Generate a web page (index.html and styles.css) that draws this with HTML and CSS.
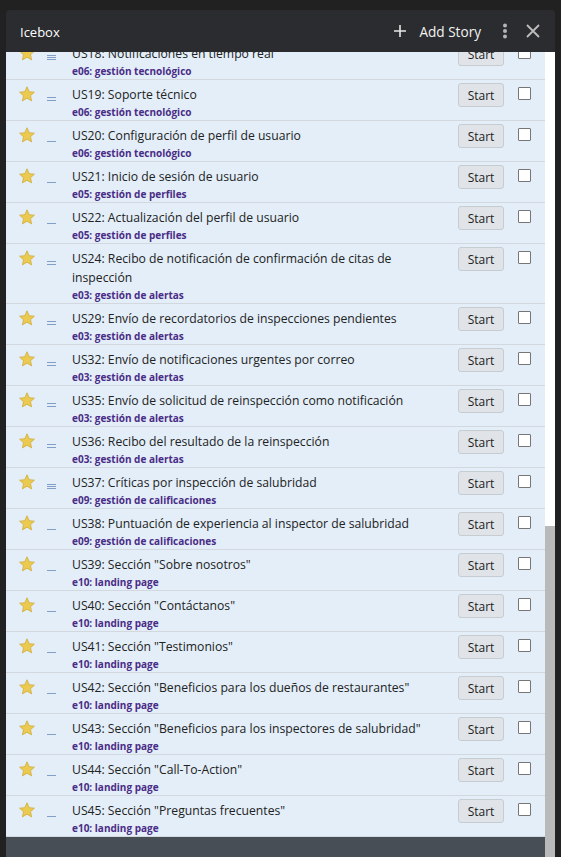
FILE: index.html
```html
<!DOCTYPE html>
<html lang="es">
<head>
<meta charset="utf-8">
<title>Icebox</title>
<link rel="stylesheet" href="styles.css">
</head>
<body>
<div class="panel">
  <header class="panel-head">
    <span class="panel-title">Icebox</span>
    <div class="actions">
      <button class="add-story">
        <svg class="plus" width="12" height="12" viewBox="0 0 12 12"><path d="M6 0v12M0 6h12" stroke="currentColor" stroke-width="1.6"/></svg>
        Add Story
      </button>
      <button class="icon-btn kebab" aria-label="More">
        <svg width="6" height="16" viewBox="0 0 6 16"><circle cx="3" cy="2.5" r="2"/><circle cx="3" cy="8" r="2"/><circle cx="3" cy="13.5" r="2"/></svg>
      </button>
      <button class="icon-btn close" aria-label="Close">
        <svg width="14" height="14" viewBox="0 0 14 14"><path d="M1 1l12 12M13 1L1 13" stroke="currentColor" stroke-width="1.8"/></svg>
      </button>
    </div>
  </header>
  <div class="panel-body">
    <div class="scroller" id="scroller">
      <ul class="stories" id="stories"></ul>
    </div>
    <div class="scrollbar"><div class="thumb" style="margin-top:474px"></div></div>
  </div>
</div>
<script src="script.js"></script>
</body>
</html>
```

FILE: script.js
```js
const stories = [
  ["US18: Notificaciones en tiempo real", "e06: gestión tecnológico", 3],
  ["US19: Soporte técnico", "e06: gestión tecnológico", 2],
  ["US20: Configuración de perfil de usuario", "e06: gestión tecnológico", 1],
  ["US21: Inicio de sesión de usuario", "e05: gestión de perfiles", 1],
  ["US22: Actualización del perfil de usuario", "e05: gestión de perfiles", 1],
  ["US24: Recibo de notificación de confirmación de citas de inspección", "e03: gestión de alertas", 2],
  ["US29: Envío de recordatorios de inspecciones pendientes", "e03: gestión de alertas", 2],
  ["US32: Envío de notificaciones urgentes por correo", "e03: gestión de alertas", 2],
  ["US35: Envío de solicitud de reinspección como notificación", "e03: gestión de alertas", 2],
  ["US36: Recibo del resultado de la reinspección", "e03: gestión de alertas", 2],
  ["US37: Críticas por inspección de salubridad", "e09: gestión de calificaciones", 3],
  ["US38: Puntuación de experiencia al inspector de salubridad", "e09: gestión de calificaciones", 1],
  ["US39: Sección \"Sobre nosotros\"", "e10: landing page", 1],
  ["US40: Sección \"Contáctanos\"", "e10: landing page", 1],
  ["US41: Sección \"Testimonios\"", "e10: landing page", 1],
  ["US42: Sección \"Beneficios para los dueños de restaurantes\"", "e10: landing page", 1],
  ["US43: Sección \"Beneficios para los inspectores de salubridad\"", "e10: landing page", 1],
  ["US44: Sección \"Call-To-Action\"", "e10: landing page", 1],
  ["US45: Sección \"Preguntas frecuentes\"", "e10: landing page", 1]
];

const star = '<svg width="16" height="16" viewBox="0 0 16 16"><path d="M8 0.8l2.2 4.9 5.2 0.5-3.9 3.5 1.1 5.2L8 12.2l-4.6 2.7 1.1-5.2L0.6 6.2l5.2-0.5z" fill="#ecca4f" stroke="#cfac3a" stroke-width="0.8" stroke-linejoin="round"/></svg>';

const list = document.getElementById("stories");
list.innerHTML = stories.map(([name, epic, pts]) => {
  const lines = '<i></i>'.repeat(pts);
  return '<li class="story">' +
    '<span class="star">' + star + '</span>' +
    '<span class="pts pts-' + pts + '">' + lines + '</span>' +
    '<div class="info"><div class="name"></div><div class="epic"></div></div>' +
    '<button class="start">Start</button>' +
    '<span class="check"></span>' +
    '</li>';
}).join("");

list.querySelectorAll(".story").forEach((li, i) => {
  li.querySelector(".name").textContent = stories[i][0];
  li.querySelector(".epic").textContent = stories[i][1];
});

document.getElementById("scroller").scrollTop = 13;
```

FILE: styles.css
```css
* { box-sizing: border-box; }

html, body {
  margin: 0;
  height: 100%;
  overflow: hidden;
}

body {
  background: #212121;
  font-family: "Open Sans", "Noto Sans", sans-serif;
  padding: 10px 6px 0;
}

.panel {
  background: #2b2c2f;
  border-radius: 4px 4px 0 0;
  height: calc(100vh - 10px);
  display: flex;
  flex-direction: column;
}

.panel-head {
  height: 42px;
  flex: none;
  display: flex;
  align-items: center;
  justify-content: space-between;
  padding: 0 15px 0 14px;
  color: #fff;
}

.panel-title {
  font-size: 13px;
  color: #fff;
  padding-top: 1px;
}

.actions {
  display: flex;
  align-items: center;
}

.add-story {
  background: none;
  border: 0;
  color: #f2f2f2;
  font: 13.6px "Open Sans", sans-serif;
  display: flex;
  align-items: center;
  gap: 13px;
  padding: 0;
}

.plus { color: #e6e6e6; }

.icon-btn {
  background: none;
  border: 0;
  padding: 0;
  display: flex;
  align-items: center;
  justify-content: center;
}

.kebab {
  margin-left: 21px;
  fill: #b5b5b5;
}

.close {
  margin-left: 18px;
  color: #bdbdbd;
}

.panel-body {
  flex: 1;
  display: flex;
  min-height: 0;
}

.scroller {
  flex: 1;
  background: #474e56;
  overflow: hidden;
}

.scrollbar {
  width: 10px;
  flex: none;
  background: #ffffff;
}

.thumb {
  height: 500px;
  background: #b9b9b9;
}

.stories {
  list-style: none;
  margin: 0;
  padding: 0 0 30px;
}

.story {
  display: flex;
  align-items: flex-start;
  background: #e3eef8;
  border-bottom: 1px solid #d2d8de;
  padding: 0 14px 0 13px;
}

.star {
  width: 16px;
  height: 16px;
  margin-top: 6px;
  flex: none;
  display: flex;
}

.pts {
  width: 9px;
  height: 21px;
  margin-left: 12px;
  flex: none;
  display: flex;
  flex-direction: column;
  justify-content: flex-end;
  gap: 2px;
}

.pts-3 { gap: 1px; }

.pts i {
  display: block;
  height: 1px;
  background: #7f9fc6;
}

.info {
  flex: 1;
  min-width: 0;
  margin-left: 16px;
  margin-right: 10px;
  padding-top: 5px;
}

.name {
  font-size: 12.2px;
  line-height: 19px;
  color: #222;
}

.epic {
  font-size: 10px;
  font-weight: 700;
  line-height: 15px;
  padding-top: 1px;
  color: #4a2c86;
}

.start {
  flex: none;
  width: 46px;
  height: 24px;
  margin-top: 3px;
  background: #e0e4e8;
  border: 1px solid #c7ccd1;
  border-radius: 3px;
  font: 12px "Open Sans", sans-serif;
  color: #222;
  padding: 0;
}

.check {
  flex: none;
  width: 13px;
  height: 13px;
  margin-top: 7px;
  margin-left: 14px;
  background: #fff;
  border: 1px solid #767676;
  border-radius: 1px;
}
```
